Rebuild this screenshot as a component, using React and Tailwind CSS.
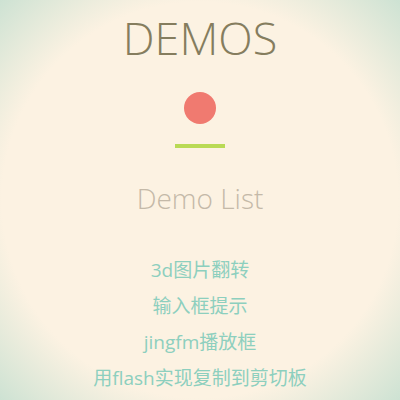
export default function App() {
  const items = ["3d图片翻转", "输入框提示", "jingfm播放框", "用flash实现复制到剪切板"];
  return (
    <div className="w-[400px] h-[400px] overflow-hidden bg-[radial-gradient(circle_at_center,#fcf2e2_70%,#cde2d3_100%)] flex flex-col items-center" style={{ fontFamily: '"Open Sans", "Noto Sans CJK SC", sans-serif' }}>
      <h1 className="pt-[15px] text-[45px] leading-[45px] font-[350] text-[#857d5e]">DEMOS</h1>
      <div className="mt-[32px] w-[32px] h-[32px] rounded-full bg-[#f07a70]" />
      <div className="mt-[20px] w-[50px] h-[4px] bg-[#b9da55]" />
      <h2 className="mt-[36px] text-[28px] leading-[28px] font-[350] text-[#c4b9a8]">Demo List</h2>
      <ul className="mt-[40px] flex flex-col items-center">
        {items.map((t) => (
          <li key={t} className="text-[19px] leading-[36px] text-[#8dcfbe]">{t}</li>
        ))}
      </ul>
    </div>
  );
}
